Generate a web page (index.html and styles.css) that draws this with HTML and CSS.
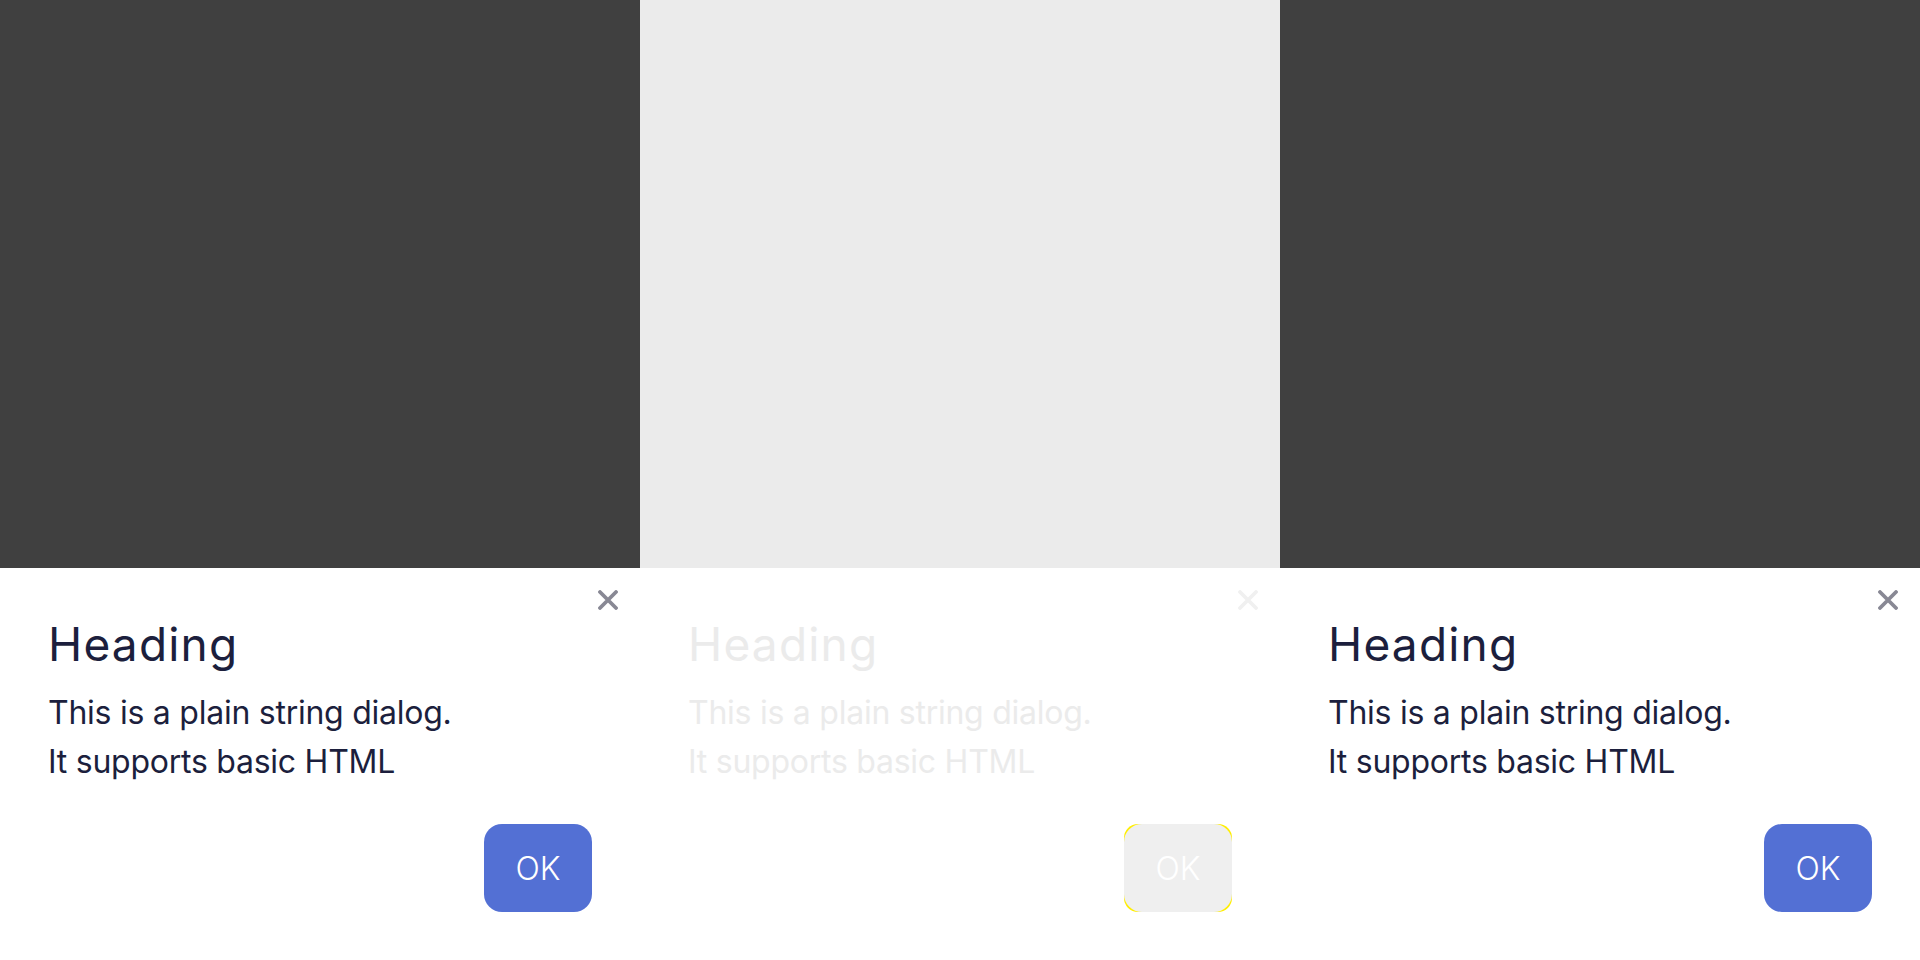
FILE: index.html
```html
<!DOCTYPE html>
<html lang="en">
<head>
<meta charset="utf-8">
<title>Dialogs</title>
<link rel="stylesheet" href="styles.css">
</head>
<body>
<div class="stage">
  <section class="panel panel-dark">
    <div class="backdrop"></div>
    <div class="dialog">
      <button class="close" aria-label="Close">
        <svg viewBox="0 0 20 20" width="20" height="20"><path d="M2 2 L18 18 M18 2 L2 18" /></svg>
      </button>
      <h2 class="heading">Heading</h2>
      <div class="body">This is a plain string dialog.<br>It supports basic HTML</div>
      <div class="actions"><button class="ok">OK</button></div>
    </div>
  </section>
  <section class="panel panel-light">
    <div class="backdrop"></div>
    <div class="dialog dialog-faded">
      <button class="close" aria-label="Close">
        <svg viewBox="0 0 20 20" width="20" height="20"><path d="M2 2 L18 18 M18 2 L2 18" /></svg>
      </button>
      <h2 class="heading">Heading</h2>
      <div class="body">This is a plain string dialog.<br>It supports basic HTML</div>
      <div class="actions"><span class="ok-ring"><button class="ok">OK</button></span></div>
    </div>
  </section>
  <section class="panel panel-dark">
    <div class="backdrop"></div>
    <div class="dialog">
      <button class="close" aria-label="Close">
        <svg viewBox="0 0 20 20" width="20" height="20"><path d="M2 2 L18 18 M18 2 L2 18" /></svg>
      </button>
      <h2 class="heading">Heading</h2>
      <div class="body">This is a plain string dialog.<br>It supports basic HTML</div>
      <div class="actions"><button class="ok">OK</button></div>
    </div>
  </section>
</div>
</body>
</html>
```
FILE: styles.css
```css
html, body {
  margin: 0;
  padding: 0;
  width: 1920px;
  height: 960px;
  overflow: hidden;
  font-family: Inter, "Noto Sans", sans-serif;
}

.stage {
  display: flex;
  width: 1920px;
  height: 960px;
}

.panel {
  width: 640px;
  display: flex;
  flex-direction: column;
}

.backdrop {
  flex: 1;
}

.panel-dark .backdrop { background: #404040; }
.panel-light .backdrop { background: #ebebeb; }

.dialog {
  position: relative;
  height: 392px;
  box-sizing: border-box;
  padding: 48px 48px 48px 48px;
  background: #ffffff;
  display: flex;
  flex-direction: column;
  color: #1c1f3d;
}

.close {
  position: absolute;
  top: 22px;
  right: 22px;
  width: 20px;
  height: 20px;
  padding: 0;
  border: 0;
  background: none;
  line-height: 0;
}

.close svg path {
  stroke: #888894;
  stroke-width: 3.8;
  stroke-linecap: round;
  fill: none;
}

.heading {
  margin: 0;
  font-size: 46px;
  line-height: 56px;
  font-weight: 400;
  letter-spacing: 1.2px;
}

.body {
  margin-top: 16px;
  font-size: 32px;
  line-height: 49px;
  font-weight: 400;
  letter-spacing: -0.25px;
}

.actions {
  margin-top: auto;
  display: flex;
  justify-content: flex-end;
}

.ok {
  width: 108px;
  height: 88px;
  border: 0;
  border-radius: 18px;
  background: #5370d4;
  color: #ffffff;
  font-family: Inter, "Noto Sans", sans-serif;
  font-size: 32px;
  font-weight: 300;
  padding: 0;
  display: block;
}

.dialog-faded { color: #ebebeb; }
.dialog-faded .close svg path { stroke: #f0f0f0; }

.ok-ring {
  display: block;
  border-radius: 14px;
  background: #ffee00;
}

.dialog-faded .ok {
  background: #efefef;
  color: #ffffff;
}
```
